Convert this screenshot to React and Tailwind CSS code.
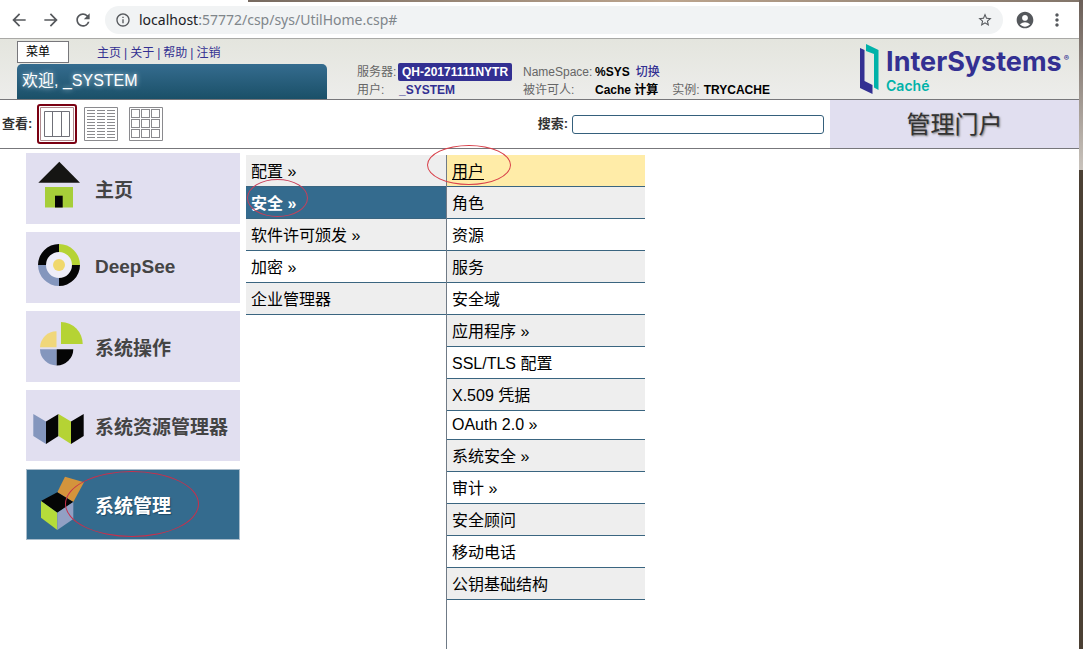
import {
  MdAccountCircle,
  MdArrowBack,
  MdArrowForward,
  MdInfoOutline,
  MdMoreVert,
  MdRefresh,
  MdStarBorder,
} from "react-icons/md";

const settingsItems = [
  { label: "配置 »", shaded: true },
  { label: "安全 »", selected: true },
  { label: "软件许可颁发 »", shaded: true },
  { label: "加密 »" },
  { label: "企业管理器", shaded: true },
];

const securityItems = [
  { label: "用户", highlighted: true },
  { label: "角色", shaded: true },
  { label: "资源" },
  { label: "服务", shaded: true },
  { label: "安全域" },
  { label: "应用程序 »", shaded: true },
  { label: "SSL/TLS 配置" },
  { label: "X.509 凭据", shaded: true },
  { label: "OAuth 2.0 »", compact: true },
  { label: "系统安全 »", shaded: true },
  { label: "审计 »" },
  { label: "安全顾问", shaded: true },
  { label: "移动电话" },
  { label: "公钥基础结构", shaded: true },
];

function HomeIcon() {
  return (
    <svg viewBox="0 0 58 71" className="h-[71px] w-[58px] shrink-0" aria-hidden="true">
      <path d="M29.3 8.7 50 29.7H8.3z" fill="#151513" />
      <path d="M15 34h28v20.5H15z" fill="#a6ce39" />
      <path d="M25 42.7h7.7v11.8H25z" fill="#050505" />
    </svg>
  );
}

function DeepSeeIcon() {
  return (
    <svg viewBox="0 0 58 71" className="h-[71px] w-[58px] shrink-0" aria-hidden="true">
      <circle cx="29" cy="33" r="14" fill="#eeedf8" />
      <path d="M8 33A21 21 0 0 1 29 12v8a13 13 0 0 0-13 13z" fill="#050505" />
      <path d="M29 12a21 21 0 0 1 21 21h-8a13 13 0 0 0-13-13z" fill="#b5d334" />
      <path d="M50 33a21 21 0 0 1-21 21v-8a13 13 0 0 0 13-13z" fill="#050505" />
      <path d="M29 54A21 21 0 0 1 8 33h8a13 13 0 0 0 13 13z" fill="#8496bd" />
      <circle cx="29" cy="33" r="6" fill="#f0d86c" />
    </svg>
  );
}

function OperationIcon() {
  return (
    <svg viewBox="0 0 58 71" className="h-[71px] w-[58px] shrink-0" aria-hidden="true">
      <path d="M26.5 20.3v16H10a16.5 16.5 0 0 1 16.5-16z" fill="#f0d77a" />
      <path d="M10 38.3h16.7v16.2A16.5 16.5 0 0 1 10 38.3z" fill="#8496bd" />
      <path d="M43.3 38.3H26.7v16.2a16.5 16.5 0 0 0 16.6-16.2z" fill="#050505" />
      <path d="M31 11a22 22 0 0 1 21.7 22H31z" fill="#b5d334" />
    </svg>
  );
}

function ExplorerIcon() {
  return (
    <svg viewBox="0 0 58 71" className="h-[71px] w-[58px] shrink-0" aria-hidden="true">
      <path d="M3.3 24 16 31.5V54L3.3 46z" fill="#8496bd" />
      <path d="M16 31.5 28.5 24v22L16 54z" fill="#050505" />
      <path d="M28.5 24 41 31.5V54l-12.5-8z" fill="#b5d334" />
      <path d="M41 31.5 53.7 24v22L41 54z" fill="#050505" />
    </svg>
  );
}

function AdminIcon() {
  return (
    <svg viewBox="0 0 58 71" className="h-[71px] w-[58px] shrink-0" aria-hidden="true">
      <path d="M27.3 23.3 35 7.7l19 5.6L43.3 33z" fill="#d4943c" />
      <path d="M11 32l16.3-8.7 16 9.7-16 10.7z" fill="#050505" />
      <path d="M11 32l16.3 11.7V61L11 48.7z" fill="#b5dc3a" />
      <path d="M27.3 43.7 43.3 33v17l-16 11z" fill="#92a0c4" />
    </svg>
  );
}

function InterSystemsMark() {
  return (
    <svg viewBox="0 0 20 50" className="h-[50px] w-5 shrink-0" aria-hidden="true">
      <path d="M6 0 18.5 6v40L14 43.5V10L6 7z" fill="#00b2a9" />
      <path d="M0 4l4.500 2v31l8 4v9L0 44z" fill="#333092" />
    </svg>
  );
}

const sections = [
  { label: "主页", Icon: HomeIcon },
  { label: "DeepSee", Icon: DeepSeeIcon, latin: true },
  { label: "系统操作", Icon: OperationIcon },
  { label: "系统资源管理器", Icon: ExplorerIcon },
  { label: "系统管理", Icon: AdminIcon, selected: true },
];

function ColumnsIcon() {
  return (
    <svg viewBox="0 0 34 34" className="size-[34px]" fill="none" aria-hidden="true">
      <path d="M.5.5h33v33H.5z" stroke="#b08a8e" />
      <path d="M4.5 4.5h25v25h-25zM12.5 4.5v25M21.5 4.5v25" stroke="#6f7078" />
    </svg>
  );
}

function ListIcon() {
  return (
    <svg viewBox="0 0 34 34" className="size-[34px]" fill="none" stroke="#8a8a8e" aria-hidden="true">
      <path d="M.5.5h33v33H.5z" />
      {[3, 6, 9, 12, 15, 18, 21, 24, 27, 30].map((y) => (
        <path key={y} d={`M3 ${y}.5h8M13 ${y}.5h8M23 ${y}.5h8`} />
      ))}
    </svg>
  );
}

function GridIcon() {
  return (
    <svg viewBox="0 0 34 34" className="size-[34px]" fill="none" stroke="#8a8a8e" aria-hidden="true">
      <path d="M.5.5h33v33H.5z" />
      {[2.5, 12.5, 22.5].map((y) =>
        [2.5, 12.5, 22.5].map((x) => (
          <rect key={`${x}-${y}`} x={x} y={y} width="8" height="8" />
        ))
      )}
    </svg>
  );
}

function BrowserBar() {
  return (
    <div className="flex h-[37px] items-center border-b border-[#a9a9a6] bg-white pl-[9px] pr-3 text-[#55585c]">
      <div className="flex gap-3">
        <button type="button" aria-label="后退">
          <MdArrowBack className="size-5" />
        </button>
        <button type="button" aria-label="前进">
          <MdArrowForward className="size-5" />
        </button>
        <button type="button" aria-label="刷新">
          <MdRefresh className="size-5" />
        </button>
      </div>
      <div className="ml-3 flex h-7 flex-1 items-center rounded-full bg-[#f1f3f4] px-2.5">
        <MdInfoOutline className="size-4" />
        <p className="ml-2 flex-1 font-['Noto_Sans',sans-serif] text-sm text-[#80868b]">
          <span className="text-[#202124]">localhost</span>:57772/csp/sys/UtilHome.csp#
        </p>
        <button type="button" aria-label="收藏">
          <MdStarBorder className="size-4" />
        </button>
      </div>
      <button type="button" className="ml-3" aria-label="用户资料">
        <MdAccountCircle className="size-5" />
      </button>
      <button type="button" className="ml-3" aria-label="更多">
        <MdMoreVert className="size-5" />
      </button>
    </div>
  );
}

function PortalHeader() {
  return (
    <header className="flex h-[61px] border-b border-[#77777b] bg-linear-to-b from-[#e4e5de] to-[#ededeb] pl-[17px] pr-2.5 text-xs">
      <div className="flex w-[310px] flex-col justify-between pt-0.5">
        <div className="flex items-center">
          <button
            type="button"
            className="h-[22px] w-[52px] border border-[#77777b] bg-white pl-2 text-left text-black"
          >
            菜单
          </button>
          <nav className="ml-7 flex gap-[3px] pt-0.5 text-[#333092]">
            <a href="#home">主页</a>|<a href="#about">关于</a>|<a href="#help">帮助</a>|
            <a href="#logout">注销</a>
          </nav>
        </div>
        <div className="h-[35px] rounded-t-[5px] bg-linear-to-b from-[#356c8f] to-[#1a5068] px-[5px] text-base leading-[34px] text-white [text-shadow:0_0_5px_#b8d4e4]">
          欢迎, _SYSTEM
        </div>
      </div>

      <div className="ml-[30px] mt-6 grid h-9 grid-cols-[41px_125px_72px_auto] grid-rows-2 items-center whitespace-nowrap leading-[18px] text-[#666]">
        <span>服务器:</span>
        <span>
          <b className="inline-block rounded-xs bg-[#333092] px-1 text-white">QH-20171111NYTR</b>
        </span>
        <span>NameSpace:</span>
        <span className="flex gap-1.5 font-bold text-black">
          %SYS
          <a href="#switch" className="font-medium text-[#333092]">
            切换
          </a>
        </span>
        <span>用户:</span>
        <b className="pl-px text-[#333092]">_SYSTEM</b>
        <span>被许可人:</span>
        <span className="flex">
          <b className="text-black">Cache 计算</b>
          <span className="ml-3.5">实例:</span>
          <b className="ml-1 text-black">TRYCACHE</b>
        </span>
      </div>

      <div className="ml-auto flex pt-[5px] font-['Inter',sans-serif]">
        <InterSystemsMark />
        <div className="ml-1.5">
          <p className="flex text-[27px] font-bold leading-9 text-[#333092]">
            InterSystems
            <span className="ml-0.5 mt-2 text-[8px] leading-3">®</span>
          </p>
          <p className="text-sm font-semibold leading-3 text-[#00b2a9]">Caché</p>
        </div>
      </div>
    </header>
  );
}

function Toolbar() {
  return (
    <div className="flex h-[49px] items-center border-b border-[#77777b] text-[13px] font-bold text-[#333]">
      <div className="flex items-center pl-0.5">
        <span>查看:</span>
        <button
          type="button"
          aria-label="列视图"
          className="ml-[5px] rounded-[3px] border-2 border-[#7a0012] p-px"
        >
          <ColumnsIcon />
        </button>
        <button type="button" aria-label="列表视图" className="ml-[7px]">
          <ListIcon />
        </button>
        <button type="button" aria-label="图标视图" className="ml-[11px]">
          <GridIcon />
        </button>
      </div>
      <label htmlFor="search" className="ml-auto">
        搜索:
      </label>
      <input
        id="search"
        type="text"
        className="ml-1 h-[19px] w-[252px] rounded-[3px] border border-[#35607c] bg-white px-1 font-normal outline-none"
      />
      <h1 className="ml-1.5 h-full w-[249px] bg-[#e1dff0] text-center text-2xl font-normal leading-[50px] text-[#333] [text-shadow:1px_1px_2px_#777]">
        管理门户
      </h1>
    </div>
  );
}

function SectionTile({ label, Icon, selected, latin }) {
  return (
    <a
      href="#section"
      className={`relative flex h-[71px] items-center pl-1 text-[19px] font-bold ${
        selected
          ? "bg-[#346b8e] text-white outline -outline-offset-1 outline-[#a9bccb] [text-shadow:1px_1px_1px_#1f4a66]"
          : "bg-[#e1dff0] text-[#444]"
      }`}
    >
      <Icon />
      <span className={`ml-[7px] whitespace-nowrap ${latin ? "" : "pt-1.5"}`}>{label}</span>
      {selected ? (
        <span className="absolute left-[39px] top-0.5 h-[66px] w-[134px] rounded-[50%] border border-[#c8304c]" />
      ) : null}
    </a>
  );
}

function MenuItem({ label, selected, highlighted, shaded, compact }) {
  return (
    <li>
      <a
        href="#item"
        className={`relative flex items-center border-b border-[#3a6580] pl-[5px] ${
          compact ? "h-[29px]" : "h-8 pt-0.5"
        } ${selected ? "bg-[#346b8e] font-bold text-white" : "text-black"} ${
          highlighted ? "bg-[#ffeca8] underline underline-offset-2" : ""
        } ${shaded ? "bg-[#eee]" : ""}`}
      >
        {label}
        {selected ? (
          <span className="absolute left-px -top-2 h-[38px] w-[61px] rounded-[50%] border border-[#c8405a]" />
        ) : null}
        {highlighted ? (
          <span className="absolute -left-5 -top-2.5 h-10 w-[84px] rounded-[50%] border border-[#d8404a]" />
        ) : null}
      </a>
    </li>
  );
}

function App() {
  return (
    <div className="flex min-h-screen font-['Liberation_Sans','Noto_Sans_CJK_SC',sans-serif]">
      <div className="flex min-w-0 flex-1 flex-col bg-white">
        <div className="ml-[248px] h-0.5 bg-linear-to-r from-[#776a60] via-[#bda58e] to-[#82756a]" />
        <BrowserBar />
        <PortalHeader />
        <Toolbar />
        <main className="flex flex-1 pl-[26px]">
          <nav className="flex w-[214px] flex-col gap-2 pt-1">
            {sections.map((section) => (
              <SectionTile key={section.label} {...section} />
            ))}
          </nav>
          <ul className="ml-1.5 w-[200px] pt-1.5">
            {settingsItems.map((item) => (
              <MenuItem key={item.label} {...item} />
            ))}
          </ul>
          <div className="flex w-[199px] flex-col pt-1.5">
            <ul className="flex-1 border-l border-[#6f7a86]">
              {securityItems.map((item) => (
                <MenuItem key={item.label} {...item} />
              ))}
            </ul>
          </div>
        </main>
      </div>
      <div className="flex w-1 flex-col">
        <div className="h-[170px] bg-linear-to-b from-[#6b5f58] to-[#c9c3bc]" />
        <div className="flex-1 bg-[#4b4034]" />
      </div>
    </div>
  );
}

export default App;
